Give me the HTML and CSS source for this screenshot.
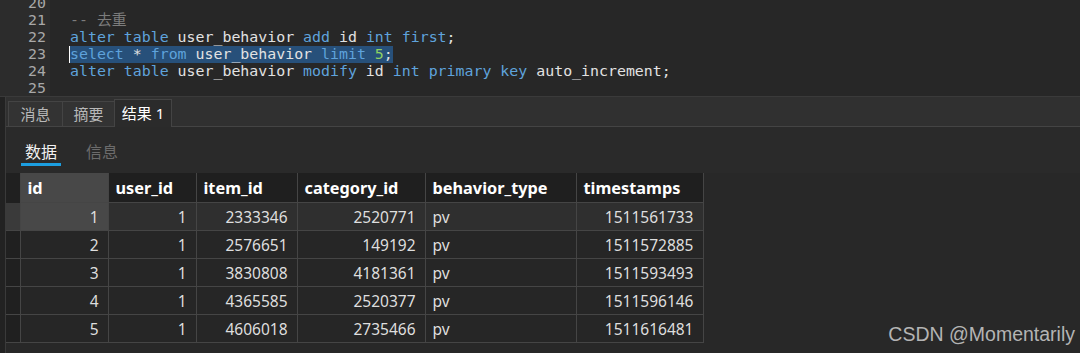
FILE: index.html
```html
<!DOCTYPE html>
<html lang="zh-CN">
<head>
    <meta charset="UTF-8">
    <title>结果 1</title>
    <link rel="stylesheet" href="styles.css">
</head>
<body>
    <div class="editor">
        <div class="gutter">
            <div>20</div>
            <div>21</div>
            <div>22</div>
            <div>23</div>
            <div>24</div>
            <div>25</div>
        </div>
        <div class="code">
            <div class="line"></div>
            <div class="line"><span class="cm">-- 去重</span></div>
            <div class="line"><span class="kw">alter table</span> user_behavior <span class="kw">add</span> id <span class="kw">int first</span>;</div>
            <div class="line"><span class="sel"><span class="kw">select</span> * <span class="kw">from</span> user_behavior <span class="kw">limit</span> <span class="num">5</span>;</span></div>
            <div class="line"><span class="kw">alter table</span> user_behavior <span class="kw">modify</span> id <span class="kw">int primary key</span> auto_increment;</div>
            <div class="line"></div>
        </div>
    </div>

    <div class="bottom">
        <div class="side"></div>
        <div class="panel">
            <div class="tabs">
                <div class="tab t1">消息</div>
                <div class="tab t2">摘要</div>
                <div class="tab active">结果 1</div>
            </div>
            <div class="subtabs">
                <div class="subtab active">数据</div>
                <div class="subtab">信息</div>
            </div>
            <table class="grid">
                <thead>
                    <tr>
                        <th class="ind"></th>
                        <th class="c-id cur">id</th>
                        <th class="c-uid">user_id</th>
                        <th class="c-item">item_id</th>
                        <th class="c-cat">category_id</th>
                        <th class="c-type">behavior_type</th>
                        <th class="c-ts">timestamps</th>
                    </tr>
                </thead>
                <tbody id="rows"></tbody>
            </table>
        </div>
    </div>

    <div class="watermark">CSDN @Momentarily</div>

    <script>
        const rows = [
            [1, 1, 2333346, 2520771, 'pv', 1511561733],
            [2, 1, 2576651, 149192, 'pv', 1511572885],
            [3, 1, 3830808, 4181361, 'pv', 1511593493],
            [4, 1, 4365585, 2520377, 'pv', 1511596146],
            [5, 1, 4606018, 2735466, 'pv', 1511616481]
        ];
        const body = document.getElementById('rows');
        rows.forEach((r, i) => {
            const tr = document.createElement('tr');
            if (i === 0) tr.className = 'current';
            tr.innerHTML = `
                <td class="ind"></td>
                <td class="val ${i === 0 ? 'cur' : ''}">${r[0]}</td>
                <td class="val">${r[1]}</td>
                <td class="val">${r[2]}</td>
                <td class="val">${r[3]}</td>
                <td>${r[4]}</td>
                <td class="val">${r[5]}</td>
            `;
            body.appendChild(tr);
        });
    </script>
</body>
</html>
```

FILE: styles.css
```css
body {
    margin: 0;
    width: 1080px;
    height: 353px;
    overflow: hidden;
    background: #282828;
    font-family: "Noto Sans", "Noto Sans CJK SC", sans-serif;
    color: #dcdcdc;
}

.editor {
    display: flex;
    height: 96px;
    overflow: hidden;
    background: #272727;
    border-bottom: 1px solid #3a3a3a;
    font-family: "DejaVu Sans Mono", "Noto Sans CJK SC", monospace;
    font-size: 14.9px;
}

.gutter {
    width: 46px;
    padding-right: 4px;
    margin-top: -5px;
    background: #2c2c2c;
    color: #a8a8a8;
    text-align: right;
}

.gutter div,
.code .line {
    height: 17px;
    line-height: 17px;
}

.code {
    margin-top: -5px;
    padding-left: 20px;
    color: #e2e2e2;
}

.code .line {
    white-space: pre;
}

.kw {
    color: #5fa3dc;
}

.cm {
    color: #7c7c7c;
}

.num {
    color: #8fd163;
}

.sel {
    display: inline-block;
    background: #27507a;
    border-left: 1px solid #fff;
    margin-left: -1px;
}

.bottom {
    display: flex;
    height: 256px;
}

.side {
    width: 5px;
    background: #222;
    border-right: 1px solid #3a3a3a;
}

.panel {
    flex: 1;
}

.tabs {
    display: flex;
    align-items: flex-end;
    height: 30px;
    padding-left: 2px;
    background: #303030;
    border-bottom: 1px solid #444;
    box-sizing: border-box;
}

.tab {
    height: 25px;
    line-height: 24px;
    box-sizing: border-box;
    border: 1px solid #444;
    border-bottom: none;
    margin-right: -1px;
    text-align: center;
    font-size: 15px;
    color: #b8b8b8;
    background: #333;
}

.t1 {
    width: 55px;
}

.t2 {
    width: 53px;
}

.tab.active {
    width: 58px;
    height: 28px;
    line-height: 26px;
    margin-bottom: -1px;
    background: #2b2b2b;
    color: #fff;
}

.subtabs {
    display: flex;
    gap: 25px;
    height: 46px;
    padding-left: 15px;
    background: #2a2a2a;
}

.subtab {
    width: 40px;
    margin-top: 14px;
    height: 25px;
    line-height: 22px;
    text-align: center;
    font-size: 16px;
    color: #6c6c6c;
    box-sizing: border-box;
}

.subtab.active {
    color: #f2f2f2;
    border-bottom: 3px solid #1c9ee0;
}

.subtab + .subtab {
    width: 34px;
    text-align: left;
}

.grid {
    border-collapse: collapse;
    table-layout: fixed;
    font-size: 15.5px;
}

.grid th,
.grid td {
    border: 1px solid #454545;
    padding: 0 9px 0 7px;
    white-space: nowrap;
}

.grid th {
    height: 29px;
    text-align: left;
    font-size: 16.3px;
    font-weight: bold;
    color: #fff;
    background: #1f1f1f;
    border-top: none;
}

.grid td {
    height: 27px;
    background: #262626;
    color: #dedede;
}

.grid td.val {
    text-align: right;
}

.grid tr.current td {
    background: #2f2f2f;
}

.grid .ind {
    width: 14px;
    padding: 0;
    box-sizing: border-box;
    background: #202020;
    border-left: none;
    border-top: none;
}

.grid tr.current td.ind {
    background: #3a3a3a;
}

.grid th.ind {
    border-bottom: none;
}

.grid .cur,
.grid tr.current td.cur {
    background: #484848;
}

.c-id {
    width: 71px;
}

.c-uid {
    width: 71px;
}

.c-item {
    width: 84px;
}

.c-cat {
    width: 111px;
}

.c-type {
    width: 134px;
}

.c-ts {
    width: 110px;
}

.watermark {
    position: absolute;
    right: 5px;
    bottom: 7px;
    font-family: "Liberation Sans", sans-serif;
    font-size: 19.5px;
    color: #b4b4b4;
}
```
